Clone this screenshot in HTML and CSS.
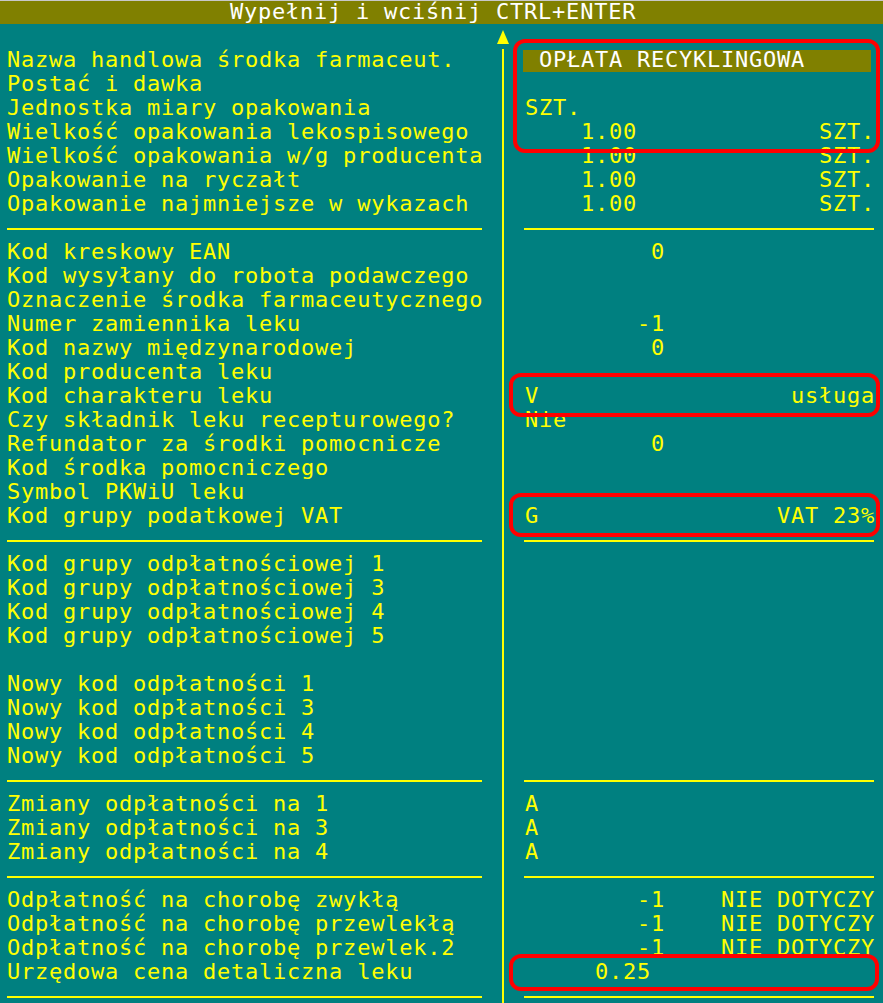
FILE: index.html
```html
<!DOCTYPE html>
<html lang="pl">
<head>
<meta charset="utf-8">
<title>Wypełnij i wciśnij CTRL+ENTER</title>
<link rel="stylesheet" href="styles.css">
</head>
<body>
<div class="screen">
  <div class="titlebar">Wypełnij i wciśnij CTRL+ENTER</div>
  <div class="panes">
    <div class="col labels">
      <div class="line"></div>
      <div class="line">Nazwa handlowa środka farmaceut.</div>
      <div class="line">Postać i dawka</div>
      <div class="line">Jednostka miary opakowania</div>
      <div class="line">Wielkość opakowania lekospisowego</div>
      <div class="line">Wielkość opakowania w/g producenta</div>
      <div class="line">Opakowanie na ryczałt</div>
      <div class="line">Opakowanie najmniejsze w wykazach</div>
      <div class="rule"></div>
      <div class="line">Kod kreskowy EAN</div>
      <div class="line">Kod wysyłany do robota podawczego</div>
      <div class="line">Oznaczenie środka farmaceutycznego</div>
      <div class="line">Numer zamiennika leku</div>
      <div class="line">Kod nazwy międzynarodowej</div>
      <div class="line">Kod producenta leku</div>
      <div class="line">Kod charakteru leku</div>
      <div class="line">Czy składnik leku recepturowego?</div>
      <div class="line">Refundator za środki pomocnicze</div>
      <div class="line">Kod środka pomocniczego</div>
      <div class="line">Symbol PKWiU leku</div>
      <div class="line">Kod grupy podatkowej VAT</div>
      <div class="rule"></div>
      <div class="line">Kod grupy odpłatnościowej 1</div>
      <div class="line">Kod grupy odpłatnościowej 3</div>
      <div class="line">Kod grupy odpłatnościowej 4</div>
      <div class="line">Kod grupy odpłatnościowej 5</div>
      <div class="line"></div>
      <div class="line">Nowy kod odpłatności 1</div>
      <div class="line">Nowy kod odpłatności 3</div>
      <div class="line">Nowy kod odpłatności 4</div>
      <div class="line">Nowy kod odpłatności 5</div>
      <div class="rule"></div>
      <div class="line">Zmiany odpłatności na 1</div>
      <div class="line">Zmiany odpłatności na 3</div>
      <div class="line">Zmiany odpłatności na 4</div>
      <div class="rule"></div>
      <div class="line">Odpłatność na chorobę zwykłą</div>
      <div class="line">Odpłatność na chorobę przewlekłą</div>
      <div class="line">Odpłatność na chorobę przewlek.2</div>
      <div class="line">Urzędowa cena detaliczna leku</div>
      <div class="rule"></div>
    </div>

    <div class="divider">
      <div class="arrow-cell">
        <svg class="arrow" width="12" height="14" viewBox="0 0 12 14"><polygon points="6,0 12,14 0,14" fill="#ffff00"/></svg>
      </div>
      <div class="vline"></div>
    </div>

    <div class="col values">
      <div class="line"></div>
      <div class="line field"> OPŁATA RECYKLINGOWA</div>
      <div class="line"></div>
      <div class="line">SZT.</div>
      <div class="line split"><span>    1.00</span><span>SZT.</span></div>
      <div class="line split"><span>    1.00</span><span>SZT.</span></div>
      <div class="line split"><span>    1.00</span><span>SZT.</span></div>
      <div class="line split"><span>    1.00</span><span>SZT.</span></div>
      <div class="rule"></div>
      <div class="line">         0</div>
      <div class="line"></div>
      <div class="line"></div>
      <div class="line">        -1</div>
      <div class="line">         0</div>
      <div class="line"></div>
      <div class="line split"><span>V</span><span>usługa</span></div>
      <div class="line">Nie</div>
      <div class="line">         0</div>
      <div class="line"></div>
      <div class="line"></div>
      <div class="line split"><span>G</span><span>VAT 23%</span></div>
      <div class="rule"></div>
      <div class="line"></div>
      <div class="line"></div>
      <div class="line"></div>
      <div class="line"></div>
      <div class="line"></div>
      <div class="line"></div>
      <div class="line"></div>
      <div class="line"></div>
      <div class="line"></div>
      <div class="rule"></div>
      <div class="line">A</div>
      <div class="line">A</div>
      <div class="line">A</div>
      <div class="rule"></div>
      <div class="line split"><span>        -1</span><span>NIE DOTYCZY</span></div>
      <div class="line split"><span>        -1</span><span>NIE DOTYCZY</span></div>
      <div class="line split"><span>        -1</span><span>NIE DOTYCZY</span></div>
      <div class="line">     0.25</div>
      <div class="rule"></div>
    </div>
  </div>

  <div class="mark mark-name"></div>
  <div class="mark mark-kind"></div>
  <div class="mark mark-vat"></div>
  <div class="mark mark-price"></div>
</div>
</body>
</html>
```

FILE: styles.css
```css
html, body {
  margin: 0;
  padding: 0;
  height: 1003px;
  overflow: hidden;
  background: #008080;
}

.screen {
  position: relative;
  width: 883px;
  height: 1003px;
  overflow: hidden;
  background: #008080;
  font-family: "DejaVu Sans Mono", "Liberation Mono", monospace;
  font-size: 22px;
  letter-spacing: 0.76px;
  color: #ffff00;
}

.titlebar {
  box-sizing: border-box;
  height: 24px;
  border-top: 1px solid #c8c8c8;
  background: #808000;
  color: #ffffff;
  line-height: 21px;
  padding-left: 230px;
  white-space: pre;
}

.panes {
  display: grid;
  grid-template-columns: 476px 42px 350px;
  padding-left: 5px;
}

.col {
  display: flex;
  flex-direction: column;
}

.line {
  height: 24px;
  line-height: 23px;
  padding-left: 2px;
  white-space: pre;
}

.split {
  display: flex;
  justify-content: space-between;
  margin-right: -2px;
}

.field {
  color: #ffffff;
  background: linear-gradient(to bottom, transparent 2px, #808000 2px);
  margin-right: 2px;
}

.rule {
  box-sizing: border-box;
  height: 24px;
  padding-top: 12px;
}

.rule::after {
  content: "";
  display: block;
  height: 2px;
  background: #ffff00;
}

.labels .rule {
  margin-left: 2px;
  margin-right: -1px;
}

.values .rule {
  margin-left: 1px;
  margin-right: -1px;
}

.divider {
  display: flex;
  flex-direction: column;
}

.arrow-cell {
  height: 24px;
}

.arrow {
  display: block;
  margin-top: 6px;
  margin-left: 16px;
}

.vline {
  flex: 1;
  width: 2px;
  margin-left: 21px;
  margin-top: 1px;
  background: #ffff00;
}

.mark {
  position: absolute;
  box-sizing: border-box;
  border: 4px solid #ff0000;
  border-radius: 12px;
}

.mark-name {
  left: 513px;
  top: 39px;
  width: 367px;
  height: 114px;
}

.mark-kind {
  left: 509px;
  top: 373px;
  width: 371px;
  height: 44px;
}

.mark-vat {
  left: 509px;
  top: 493px;
  width: 371px;
  height: 44px;
}

.mark-price {
  left: 509px;
  top: 954px;
  width: 370px;
  height: 37px;
}
```
